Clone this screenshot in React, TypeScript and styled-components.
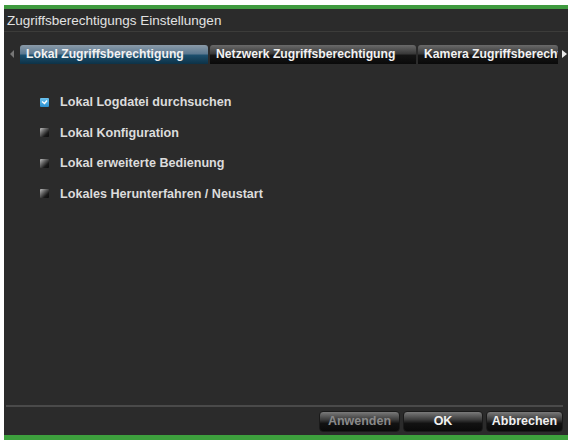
import * as React from 'react'
import styled, { createGlobalStyle } from 'styled-components'

const GlobalStyle = createGlobalStyle`
    html, body {
        margin: 0;
        padding: 0;
        background: #ffffff;
        font-family: "Liberation Sans", Arial, sans-serif;
    }
`

const Page = styled.div`
    width: 573px;
    height: 442px;
    padding: 5px 5px 2px 4px;
    box-sizing: border-box;
`

const Window = styled.div`
    height: 100%;
    display: flex;
    flex-direction: column;
    background: #2b2b2b;
    border-top: 4px solid #3f9a3f;
    border-bottom: 5px solid #3da03d;
    box-sizing: border-box;
`

const TitleBar = styled.div`
    height: 22px;
    display: flex;
    align-items: center;
    padding-left: 3px;
    color: #e2e2e2;
    font-size: 13.5px;
    border-bottom: 1px solid #3c3c3a;
`

const TabRow = styled.div`
    display: flex;
    align-items: center;
    height: 20px;
    margin-top: 12px;
    padding-left: 6px;
    overflow: hidden;
`

const Arrow = styled.span<{ $dir: 'left' | 'right' }>`
    width: 0;
    height: 0;
    flex: none;
    border-top: 4px solid transparent;
    border-bottom: 4px solid transparent;
    ${p => p.$dir === 'left'
        ? 'border-right: 4px solid #777; margin-right: 6px;'
        : 'border-left: 5px solid #e8e8e8; margin-left: 2px;'}
`

const Tab = styled.div<{ $active?: boolean; $width: number }>`
    flex: none;
    width: ${p => p.$width}px;
    height: 19px;
    display: flex;
    align-items: center;
    padding-left: 6px;
    box-sizing: border-box;
    margin-right: 2px;
    overflow: hidden;
    white-space: nowrap;
    color: #f2f2f2;
    font-size: 12.2px;
    font-weight: bold;
    border-radius: 3px 3px 0 0;
    background: ${p => p.$active
        ? 'linear-gradient(to bottom, #8a9aa8 0%, #5d7a92 45%, #1c4e6c 55%, #0d3247 100%)'
        : 'linear-gradient(to bottom, #6a6a6a 0%, #3a3a3a 45%, #141414 55%, #0a0a0a 100%)'};
`

const Options = styled.div`
    display: flex;
    flex-direction: column;
    gap: 14.5px;
    padding: 30px 0 0 36px;
    flex: 1;
`

const Option = styled.label`
    display: flex;
    align-items: center;
    gap: 11px;
    height: 16px;
    color: #dcdcdc;
    font-size: 12.6px;
    font-weight: bold;
`

const Box = styled.span<{ $checked?: boolean }>`
    width: 9px;
    height: 9px;
    flex: none;
    border-radius: 1px;
    display: flex;
    align-items: center;
    justify-content: center;
    background: ${p => p.$checked
        ? 'linear-gradient(to bottom, #6cc4f0, #2a8fd0)'
        : 'linear-gradient(135deg, #c0c0c0 0%, #6a6a6a 35%, #1a1a1a 70%, #0c0c0c 100%)'};
`

const Footer = styled.div`
    border-top: 2px solid #4a4a4a;
    margin: 0 5px 0 2px;
    height: 28px;
    display: flex;
    justify-content: flex-end;
    align-items: center;
    gap: 3px;
`

const Button = styled.button<{ $disabled?: boolean; $width: number }>`
    width: ${p => p.$width}px;
    height: 21px;
    padding: 0;
    border: 1px solid #1a1a1a;
    border-radius: 4px;
    font-family: "Liberation Sans", Arial, sans-serif;
    font-size: 12.5px;
    font-weight: bold;
    color: ${p => p.$disabled ? '#8a8a8a' : '#f0f0f0'};
    background: linear-gradient(to bottom, #7a7a7a 0%, #3c3c3c 40%, #121212 60%, #0a0a0a 100%);
`

const Check = () => (
    <svg width="7" height="6" viewBox="0 0 7 6">
        <path d="M1 2.5 L3.5 4.5 L6 1.5" stroke="#ffffff" strokeWidth="1.4" fill="none" />
    </svg>
)

const options = [
    { label: 'Lokal Logdatei durchsuchen', checked: true },
    { label: 'Lokal Konfiguration', checked: false },
    { label: 'Lokal erweiterte Bedienung', checked: false },
    { label: 'Lokales Herunterfahren / Neustart', checked: false },
]

const App = () => {
    return (
        <>
            <GlobalStyle />
            <Page>
                <Window>
                    <TitleBar>Zugriffsberechtigungs Einstellungen</TitleBar>
                    <TabRow>
                        <Arrow $dir="left" />
                        <Tab $active $width={188}>Lokal Zugriffsberechtigung</Tab>
                        <Tab $width={206}>Netzwerk Zugriffsberechtigung</Tab>
                        <Tab $width={140}>Kamera Zugriffsberechtigung</Tab>
                        <Arrow $dir="right" />
                    </TabRow>
                    <Options>
                        {options.map(({ label, checked }) => (
                            <Option key={label}>
                                <Box $checked={checked}>{checked && <Check />}</Box>
                                {label}
                            </Option>
                        ))}
                    </Options>
                    <Footer>
                        <Button $disabled $width={81}>Anwenden</Button>
                        <Button $width={80}>OK</Button>
                        <Button $width={77}>Abbrechen</Button>
                    </Footer>
                </Window>
            </Page>
        </>
    )
}

export default App
